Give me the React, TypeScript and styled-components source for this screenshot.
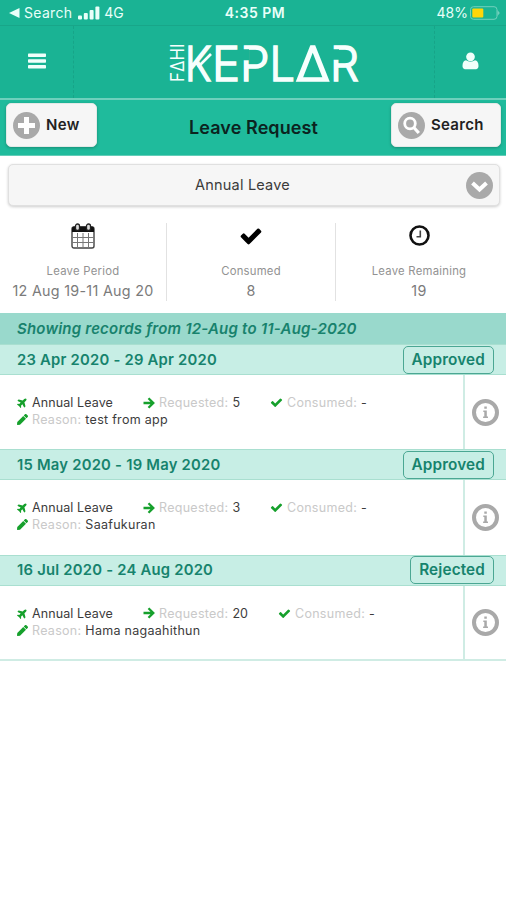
import React from "react";
import styled, { createGlobalStyle } from "styled-components";
import { FaPlane, FaPen } from "react-icons/fa";

const Global = createGlobalStyle`
  * { box-sizing: border-box; }
  body { margin: 0; background: #fff; font-family: Inter, "Liberation Sans", sans-serif; }
  svg { display: block; flex: none; }
`;

const Screen = styled.div`
  width: 506px;
  height: 900px;
  overflow: hidden;
  background: #fff;
`;

const StatusBar = styled.div`
  height: 26px;
  padding: 1px 5px 0 9px;
  display: grid;
  grid-template-columns: 1fr auto 1fr;
  align-items: center;
  background: #1ab394;
  border-bottom: 1px solid #18a689;
  color: #e9fff9;
`;
const StatusGroup = styled.div<{ $end?: boolean }>`
  display: flex;
  align-items: center;
  justify-content: ${(p) => (p.$end ? "flex-end" : "flex-start")};
`;
const StatusText = styled.span<{ $size: number; $bold?: boolean; $spacing?: number; $gap?: number }>`
  font-size: ${(p) => p.$size}px;
  font-weight: ${(p) => (p.$bold ? 600 : 400)};
  letter-spacing: ${(p) => p.$spacing ?? 0}px;
  margin-left: ${(p) => p.$gap ?? 0}px;
  line-height: 24px;
  white-space: nowrap;
`;
const Glyph = styled.svg<{ $gap: number }>`
  margin-left: ${(p) => p.$gap}px;
`;

const Header = styled.header`
  height: 72px;
  display: grid;
  grid-template-columns: 74px 1fr 72px;
  background: #1ab394;
`;
const HeaderCell = styled.div<{ $side?: "left" | "right" }>`
  display: flex;
  align-items: center;
  justify-content: center;
  border-right: ${(p) => (p.$side === "left" ? "1px dashed #17a488" : "0")};
  border-left: ${(p) => (p.$side === "right" ? "1px dashed #17a488" : "0")};
  padding-bottom: 2px;
`;
const LogoCell = styled.div`
  display: flex;
  padding-left: 86px;
`;

const TitleBar = styled.div`
  height: 58px;
  padding: 3px 5px 8px 6px;
  display: grid;
  grid-template-columns: 91px 1fr 110px;
  background: #1fbb9c;
  border-top: 2px solid #6ed0bc;
  border-bottom: 1px solid #62cdb8;
`;
const Title = styled.h1`
  margin: 5px 0 0 19px;
  font-size: 18px;
  line-height: 40px;
  font-weight: 600;
  letter-spacing: 0.1px;
  text-align: center;
  white-space: nowrap;
  color: #0c241f;
`;
const Button = styled.button`
  height: 44px;
  padding: 0 0 0 6px;
  display: flex;
  align-items: center;
  gap: 6px;
  border: 1px solid #e3e9e7;
  border-radius: 5px;
  background: #f6f6f6;
  box-shadow: 0 1px 3px rgba(0, 0, 0, 0.25);
  font: 600 15px/20px Inter, sans-serif;
  letter-spacing: 0.3px;
  color: #222;
`;

const Select = styled.div`
  height: 42px;
  margin: 8px 6px 0 8px;
  padding: 0 6px 0 33px;
  display: flex;
  align-items: center;
  border: 1px solid #e0e0e0;
  border-radius: 5px;
  background: #f6f6f6;
  box-shadow: 0 1px 3px rgba(0, 0, 0, 0.2);
`;
const SelectLabel = styled.span`
  flex: 1;
  padding: 0 46px 1px 23px;
  text-align: center;
  font-size: 14.5px;
  letter-spacing: 0.2px;
  color: #3b3b3b;
`;

const Stats = styled.section`
  height: 76px;
  margin: 17px 0 14px;
  display: grid;
  grid-template-columns: 166px 169px 167px;
`;
const Stat = styled.div<{ $line?: boolean }>`
  display: flex;
  flex-direction: column;
  align-items: center;
  border-left: ${(p) => (p.$line ? "1px solid #e2e2e2" : "0")};
`;
const StatIcon = styled.div`
  height: 25px;
  display: flex;
  align-items: center;
`;
const StatLabel = styled.div`
  margin-top: 14px;
  font-size: 11.3px;
  line-height: 18px;
  letter-spacing: 0.25px;
  color: #929292;
`;
const StatValue = styled.div`
  margin-top: 1px;
  font-size: 14.3px;
  line-height: 20px;
  letter-spacing: 0.3px;
  color: #7b7b7b;
`;

const Banner = styled.div`
  height: 31px;
  padding-left: 17px;
  background: #99d9cc;
  font-size: 15px;
  line-height: 31px;
  font-weight: 600;
  font-style: italic;
  letter-spacing: 0.2px;
  color: #18826d;
`;
const RecordHead = styled.div`
  height: 31px;
  padding: 0 12px 0 17px;
  display: flex;
  align-items: center;
  justify-content: space-between;
  background: #c7eee5;
  border-top: 1px solid #a9dfd0;
  border-bottom: 1px solid #a9dfd0;
`;
const Dates = styled.div`
  font-size: 14.8px;
  line-height: 20px;
  font-weight: 600;
  letter-spacing: 0.23px;
  color: #16836d;
`;
const Badge = styled.div`
  height: 28px;
  padding: 0 8px;
  border: 1px solid #4ba793;
  border-radius: 5px;
  font-size: 15.3px;
  line-height: 25px;
  font-weight: 600;
  letter-spacing: 0.15px;
  color: #16836d;
`;
const RecordBody = styled.div<{ $last?: boolean }>`
  height: ${(p) => (p.$last ? 75.5 : 74.4)}px;
  display: grid;
  grid-template-columns: 463px 43px;
  border-bottom: ${(p) => (p.$last ? "2px solid #cfece4" : "0")};
`;
const Details = styled.div`
  padding: 19px 0 0 17px;
  font-size: 12.5px;
  line-height: 17px;
`;
const DetailLine = styled.div`
  display: flex;
  height: 17px;
`;
const Detail = styled.div<{ $width?: number; $wide?: boolean }>`
  width: ${(p) => (p.$width ? `${p.$width}px` : "auto")};
  display: flex;
  align-items: center;
  gap: 4px;
  white-space: nowrap;
  letter-spacing: ${(p) => (p.$wide ? 0.28 : 0.1)}px;
  color: #3c3c3c;
  svg { color: #16a02c; }
`;
const Muted = styled.span`
  color: #c9c9c9;
  letter-spacing: 0.28px;
`;
const InfoCell = styled.div`
  display: flex;
  align-items: center;
  justify-content: center;
  border-left: 2px solid #cfece4;
`;

const checkPath =
  "M1671 566q0 40-28 68l-724 724-136 136q-28 28-68 28t-68-28l-136-136-362-362q-28-28-28-68t28-68l136-136q28-28 68-28t68 28l294 295 656-657q28-28 68-28t68 28l136 136q28 28 28 68z";

const Check = ({ size }: { size: number }) => (
  <svg width={size} height={size} viewBox="0 0 1792 1792" fill="currentColor">
    <path d={checkPath} />
  </svg>
);

const ArrowIcon = () => (
  <svg width="12" height="12" viewBox="0 0 12 12" fill="none" stroke="currentColor" strokeWidth="2.3">
    <path d="M0.500 6h9.500M5.500 1.200L10.300 6l-4.800 4.800" />
  </svg>
);

const MenuIcon = () => (
  <svg width="18" height="16" viewBox="0 0 18 16" fill="#f1fffb">
    <rect y="0.5" width="18" height="3.4" rx="0.7" />
    <rect y="6.3" width="18" height="3.4" rx="0.7" />
    <rect y="12.1" width="18" height="3.4" rx="0.7" />
  </svg>
);

const UserIcon = () => (
  <svg width="19" height="20" viewBox="0 0 1792 1792" fill="#f1fffb">
    <path d="M1650 1399q0 109-62.500 187t-150.500 78h-1082q-88 0-150.500-78t-62.500-187q0-85 8.500-160.500t31.500-152 58.500-131 94-89 134.500-34.500q195 128 427 128t427-128q76 0 134.500 34.500t94 89 58.500 131 31.500 152 8.500 160.500z" />
    <circle cx="896" cy="500" r="410" />
  </svg>
);

const Signal = () => (
  <Glyph $gap={6} width="22" height="14" viewBox="0 0 22 14" fill="#e9fff9">
    <rect x="0" y="9.500" width="4" height="4" rx="1" />
    <rect x="5.800" y="7" width="4" height="6.500" rx="1" />
    <rect x="11.600" y="4" width="4" height="9.500" rx="1" />
    <rect x="17.400" y="0.500" width="4" height="13" rx="1" />
  </Glyph>
);

const Battery = () => (
  <Glyph $gap={2} width="31" height="14" viewBox="0 0 31 14">
    <rect x="0.500" y="0.700" width="26.500" height="12.600" rx="3" fill="none" stroke="#72d0bd" />
    <rect x="2.300" y="2.500" width="11" height="9" rx="1" fill="#ffd60a" />
    <path d="M27.500 4l2.300 3-2.300 3z" fill="#72d0bd" />
  </Glyph>
);

const Logo = () => (
  <svg width="200" height="72" viewBox="160 26 200 72" fill="#f7fffd" role="img" aria-label="Fahi Keplar">
    <g fontFamily="Inter" fontWeight="300" fontSize="48.500" stroke="#f7fffd" strokeWidth="1.500">
      <text x="185" y="80.500" textLength="26.500" lengthAdjust="spacingAndGlyphs">K</text>
      <text x="212" y="80.500" textLength="28" lengthAdjust="spacingAndGlyphs">E</text>
      <text x="240" y="80.500" textLength="29.500" lengthAdjust="spacingAndGlyphs">P</text>
      <text x="269.500" y="80.500" textLength="25.500" lengthAdjust="spacingAndGlyphs">L</text>
      <text x="295.500" y="80.500" textLength="34.500" lengthAdjust="spacingAndGlyphs">Δ</text>
      <text x="330" y="80.500" textLength="29" lengthAdjust="spacingAndGlyphs">R</text>
    </g>
    <path d="M211 54L198 67" stroke="#f7fffd" strokeWidth="2.600" fill="none" />
    <path d="M241.500 49.300h7.500v11h-7.500zM331.500 49.300h7.500v10.500h-7.500z" fill="#1ab394" />
    <text
      transform="translate(183.600 82) rotate(-90)"
      fontFamily="Inter"
      fontSize="18"
      fontWeight="400"
      textLength="38.500"
      lengthAdjust="spacingAndGlyphs"
    >
      FΔHI
    </text>
  </svg>
);

const PlusIcon = () => (
  <svg width="27" height="27" viewBox="0 0 27 27">
    <circle cx="13.500" cy="13.500" r="13.500" fill="#a9a9a9" />
    <path d="M13.500 5v17M5 13.500h17" stroke="#fff" strokeWidth="5" />
  </svg>
);

const SearchIcon = () => (
  <svg width="27" height="27" viewBox="0 0 27 27" fill="none" stroke="#fff">
    <circle cx="13.500" cy="13.500" r="13.500" fill="#a9a9a9" stroke="none" />
    <circle cx="12" cy="11.500" r="5.300" strokeWidth="2.800" />
    <path d="M15.800 15.500l5 5.500" strokeWidth="3.200" />
  </svg>
);

const ChevronIcon = () => (
  <svg width="27" height="27" viewBox="0 0 27 27" fill="none">
    <circle cx="13.500" cy="13.500" r="13.500" fill="#a9a9a9" />
    <path d="M6.500 11l7 6.500 7-6.500" stroke="#fff" strokeWidth="4" />
  </svg>
);

const CalendarIcon = () => (
  <svg width="24" height="26" viewBox="0 0 24 26" fill="none">
    <rect x="1" y="4" width="22" height="21" rx="2" fill="#fff" stroke="#444" strokeWidth="1.400" />
    <path d="M1 9V5.500Q1 3.500 3 3.500h18q2 0 2 2V9z" fill="#111" />
    <path d="M6.500 10v15M12 10v15M17.500 10v15M1 14.500h22M1 19.500h22" stroke="#777" />
    <rect x="4.500" y="1" width="4" height="6.500" rx="2" fill="#ddd" stroke="#222" strokeWidth="1.300" />
    <rect x="15.500" y="1" width="4" height="6.500" rx="2" fill="#ddd" stroke="#222" strokeWidth="1.300" />
  </svg>
);

const ClockIcon = () => (
  <svg width="21" height="21" viewBox="0 0 21 21" fill="none" stroke="#111">
    <circle cx="10.500" cy="10.500" r="9" strokeWidth="2.600" />
    <path d="M11.300 5.500v6.300H7.500" strokeWidth="1.600" stroke="#444" />
  </svg>
);

const InfoIcon = () => (
  <svg width="27" height="27" viewBox="0 0 27 27" fill="#a9a9a9">
    <circle cx="13.500" cy="13.500" r="11.500" fill="none" stroke="#a9a9a9" strokeWidth="4" />
    <path d="M12.300 7.500h2.500v2.300h-2.500zM11.300 11.500h3.500v6h1.200v1.500h-4.900v-1.500h1.200V13h-1z" />
  </svg>
);

const PlaneIcon = styled(FaPlane)`
  transform: rotate(-45deg);
`;

interface LeaveRecord {
  dates: string;
  status: string;
  requested: number;
  reason: string;
  requestedWidth: number;
}

const records: LeaveRecord[] = [
  { dates: "23 Apr 2020 - 29 Apr 2020", status: "Approved", requested: 5, reason: "test from app", requestedWidth: 127 },
  { dates: "15 May 2020 - 19 May 2020", status: "Approved", requested: 3, reason: "Saafukuran", requestedWidth: 127 },
  { dates: "16 Jul 2020 - 24 Aug 2020", status: "Rejected", requested: 20, reason: "Hama nagaahithun", requestedWidth: 135 },
];

export default function App() {
  return (
    <Screen>
      <Global />
      <StatusBar>
        <StatusGroup>
          <svg width="11" height="10" viewBox="0 0 11 10" fill="#e9fff9">
            <path d="M0 5L10.500 0v10z" />
          </svg>
          <StatusText $size={14} $gap={4} $spacing={0.3}>Search</StatusText>
          <Signal />
          <StatusText $size={14} $gap={4}>4G</StatusText>
        </StatusGroup>
        <StatusText $size={14} $bold $spacing={0.5}>4:35 PM</StatusText>
        <StatusGroup $end>
          <StatusText $size={14}>48%</StatusText>
          <Battery />
        </StatusGroup>
      </StatusBar>
      <Header>
        <HeaderCell $side="left"><MenuIcon /></HeaderCell>
        <LogoCell><Logo /></LogoCell>
        <HeaderCell $side="right"><UserIcon /></HeaderCell>
      </Header>
      <TitleBar>
        <Button><PlusIcon />New</Button>
        <Title>Leave Request</Title>
        <Button><SearchIcon />Search</Button>
      </TitleBar>
      <Select>
        <SelectLabel>Annual Leave</SelectLabel>
        <ChevronIcon />
      </Select>
      <Stats>
        <Stat>
          <StatIcon><CalendarIcon /></StatIcon>
          <StatLabel>Leave Period</StatLabel>
          <StatValue>12 Aug 19-11 Aug 20</StatValue>
        </Stat>
        <Stat $line>
          <StatIcon><Check size={24} /></StatIcon>
          <StatLabel>Consumed</StatLabel>
          <StatValue>8</StatValue>
        </Stat>
        <Stat $line>
          <StatIcon><ClockIcon /></StatIcon>
          <StatLabel>Leave Remaining</StatLabel>
          <StatValue>19</StatValue>
        </Stat>
      </Stats>
      <Banner>Showing records from 12-Aug to 11-Aug-2020</Banner>
      {records.map((r, i) => (
        <React.Fragment key={r.dates}>
          <RecordHead>
            <Dates>{r.dates}</Dates>
            <Badge>{r.status}</Badge>
          </RecordHead>
          <RecordBody $last={i === records.length - 1}>
            <Details>
              <DetailLine>
                <Detail $width={126}><PlaneIcon size={11} />Annual Leave</Detail>
                <Detail $width={r.requestedWidth}>
                  <ArrowIcon /><Muted>Requested:</Muted><span>{r.requested}</span>
                </Detail>
                <Detail><Check size={13} /><Muted>Consumed:</Muted><span>-</span></Detail>
              </DetailLine>
              <DetailLine>
                <Detail $wide><FaPen size={11} /><Muted>Reason:</Muted><span>{r.reason}</span></Detail>
              </DetailLine>
            </Details>
            <InfoCell><InfoIcon /></InfoCell>
          </RecordBody>
        </React.Fragment>
      ))}
    </Screen>
  );
}
